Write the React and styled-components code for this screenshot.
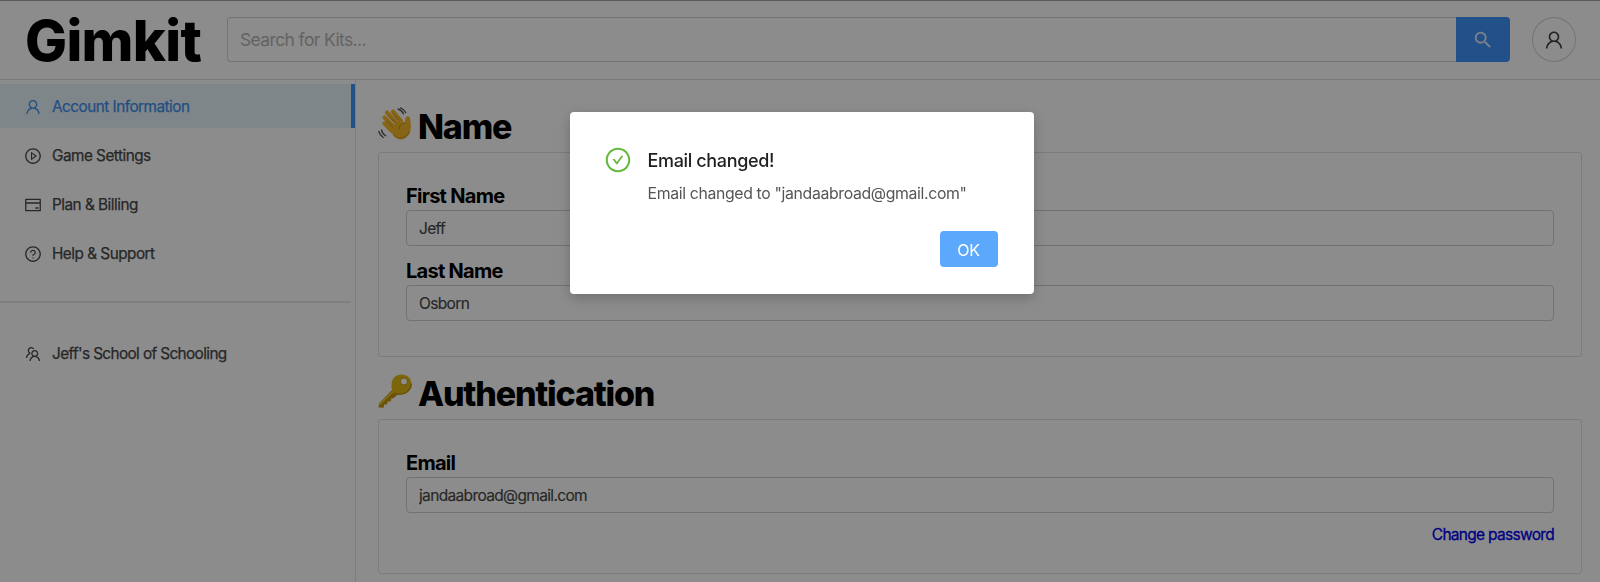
import React, { useState } from "react";
import styled, { createGlobalStyle } from "styled-components";
import {
  AiOutlineUser,
  AiOutlinePlayCircle,
  AiOutlineCreditCard,
  AiOutlineQuestionCircle,
  AiOutlineTeam,
  AiOutlineCheckCircle,
} from "react-icons/ai";
import { MdSearch } from "react-icons/md";

const GlobalStyle = createGlobalStyle`
  * {
    box-sizing: border-box;
  }

  body {
    margin: 0;
    overflow: hidden;
    background: #fff;
    color: #000;
    font-family: Inter, "Liberation Sans", sans-serif;
    font-size: 16px;
  }
`;

const Page = styled.div`
  display: flex;
  flex-direction: column;
  height: 582px;
  overflow: hidden;
  border-top: 1px solid #a6a6a6;
`;

// Header
const Header = styled.header`
  display: flex;
  align-items: center;
  flex: none;
  height: 79px;
  padding: 0 24px 1px 25px;
  border-bottom: 1px solid #dcdcdc;
`;

const Logo = styled.div`
  width: 202px;
  flex: none;
  padding-top: 2px;
  font-size: 56px;
  font-weight: 800;
  line-height: 60px;
  letter-spacing: -0.7px;
  white-space: nowrap;
`;

const SearchBar = styled.div`
  display: flex;
  flex: 1;
  height: 45px;
`;

const SearchInput = styled.input`
  flex: 1;
  padding: 0 12px;
  border: 1px solid #d2d2d2;
  border-right: none;
  border-radius: 4px 0 0 4px;
  outline: none;
  font-family: inherit;
  font-size: 17.5px;
  letter-spacing: -0.63px;

  &::placeholder {
    color: #b4b4b4;
    opacity: 1;
  }
`;

const SearchButton = styled.button`
  display: flex;
  align-items: center;
  justify-content: center;
  width: 54px;
  padding: 0;
  border: none;
  border-radius: 0 4px 4px 0;
  background: #3e94fb;
  color: #e4ecf6;
  font-size: 22px;
`;

const Avatar = styled.div`
  display: flex;
  align-items: center;
  justify-content: center;
  width: 44px;
  height: 45px;
  margin-left: 22px;
  padding-top: 1px;
  border: 1px solid #d2d2d2;
  border-radius: 50%;
  color: #404040;
  font-size: 22px;
`;

const Body = styled.div`
  display: flex;
  flex: 1;
  min-height: 0;
`;

// Sidebar
const Sidebar = styled.nav`
  width: 356px;
  flex: none;
  padding-top: 4px;
  border-right: 1px solid #e4e4e4;
`;

const MenuItem = styled.div`
  display: flex;
  align-items: center;
  height: 44px;
  margin-bottom: 5px;
  padding: 1px 0 0 24px;
  border-right: 4px solid ${(props) => (props.$active ? "#3e94fb" : "transparent")};
  background: ${(props) => (props.$active ? "#e6f4fb" : "transparent")};
  color: ${(props) => (props.$active ? "#3e8ff0" : "#484848")};
  font-size: 15.3px;
  letter-spacing: ${(props) => props.$spacing || -0.5}px;
  -webkit-text-stroke: 0.25px currentColor;
  cursor: pointer;

  svg {
    width: 18px;
    height: 18px;
    margin-right: 10px;
    stroke-width: 0;
  }
`;

const Divider = styled.div`
  height: 2px;
  margin: 26px 4px 28px 0;
  background: #e8e8e8;
`;

// Account form
const Content = styled.main`
  flex: 1;
  padding: 23px 18px 0 22px;
`;

const SectionTitle = styled.h1`
  display: flex;
  align-items: center;
  gap: 6px;
  height: 48px;
  margin: 0 0 1px;
  padding-bottom: 2px;
  font-size: 34px;
  font-weight: 800;
  letter-spacing: -1.2px;

  svg {
    flex: none;
    margin-top: -5px;
  }
`;

const Panel = styled.section`
  height: ${(props) => props.$height}px;
  margin-bottom: 13px;
  padding: 29px 27px;
  border: 1px solid #e2e2e2;
  border-radius: 3px;
`;

const Field = styled.label`
  display: block;
  margin-bottom: 11px;
`;

const FieldLabel = styled.span`
  display: block;
  height: 28px;
  font-size: 20px;
  font-weight: 700;
  line-height: 28px;
  letter-spacing: -0.72px;
`;

const Input = styled.input`
  display: block;
  width: 100%;
  height: 36px;
  padding: 0 12px;
  border: 1px solid #cfcfcf;
  border-radius: 4px;
  outline: none;
  color: #484848;
  font-family: inherit;
  font-size: 15.5px;
  letter-spacing: -0.65px;
  -webkit-text-stroke: 0.15px currentColor;
`;

const PasswordLink = styled.a`
  display: block;
  text-align: right;
  color: #0000ee;
  font-size: 15.5px;
  line-height: 22px;
  letter-spacing: -0.7px;
  -webkit-text-stroke: 0.3px currentColor;
  cursor: pointer;
`;

// Confirmation dialog
const Mask = styled.div`
  position: fixed;
  inset: 0;
  display: flex;
  align-items: flex-start;
  justify-content: center;
  padding: 112px 0 0 3px;
  background: rgba(0, 0, 0, 0.45);
`;

const Dialog = styled.div`
  display: flex;
  flex-direction: column;
  width: 464px;
  height: 182px;
  padding: 34px 36px 27px 34px;
  border-radius: 4px;
  background: #fff;
  box-shadow: 0 4px 14px rgba(0, 0, 0, 0.22);
`;

const DialogBody = styled.div`
  display: flex;
  flex: 1;
  gap: 16px;

  svg {
    flex: none;
    width: 28px;
    height: 28px;
    color: #66b93c;
  }
`;

const DialogTitle = styled.div`
  margin-top: 1px;
  color: #1f1f1f;
  font-size: 18px;
  font-weight: 500;
  line-height: 27px;
  letter-spacing: -0.35px;
`;

const DialogText = styled.div`
  margin-top: 8px;
  color: #565656;
  font-size: 15.8px;
  line-height: 24px;
  letter-spacing: -0.34px;
  white-space: nowrap;
`;

const OkButton = styled.button`
  align-self: flex-end;
  width: 58px;
  height: 36px;
  padding: 1px 0 0;
  border: none;
  border-radius: 4px;
  background: #5ca8fc;
  color: #fff;
  font-family: inherit;
  font-size: 16px;
  letter-spacing: -0.3px;
`;

const WaveIcon = () => (
  <svg width="34" height="34" viewBox="0 0 34 34" fill="none">
    <g stroke="#f5b829" strokeWidth="4.2" strokeLinecap="round">
      <path d="M6.5 16.5 14 24" />
      <path d="M6.5 10.5 16 20" />
      <path d="M9 5.5 19 16" />
      <path d="M15 4.5 23 14" />
    </g>
    <path
      d="M12 22 22 12c2 1.500 3 3 4.500 4 .8-1.800.3-4.800 2-6.300 1.600-1 3.500.2 3.700 2.200.2 3 .9 5.400.6 9.300-.4 6-4.800 11-10.300 11.200C18 32.500 15.500 28 12 22Z"
      fill="#f5b829"
    />
    <path
      d="m8.500 14.200 6 6M10.500 9l6.500 6.500M14 6l6.500 7M27 16c-4 .5-6 2.500-6 6"
      stroke="#bd7f13"
      strokeWidth="0.8"
      strokeLinecap="round"
    />
    <path d="M15 27c4.500 6.500 14 5 16.500-3" stroke="#d69a1c" strokeWidth="1.200" />
    <path
      d="M20 2c2.500.7 4.500 2.500 5.500 5M22.500 0.800c2.500 1 4.200 2.700 5.200 4.800M3.500 23c.5 2.500 2 4.500 4.200 5.700M.8 24.500c.7 2.500 2.200 4.600 4.400 6"
      stroke="#4f5963"
      strokeWidth="1.300"
      strokeLinecap="round"
    />
  </svg>
);

const KeyIcon = () => (
  <svg width="34" height="34" viewBox="0 0 34 34">
    <path
      d="M15 15 1 29.500 0.600 33.500l5 .2.600-3.200 2.800.1.700-3.200 3 .1.700-3.200 2.200-.1L20 20Z"
      fill="#c99508"
    />
    <path d="m16 16.500-14.500 14" stroke="#f3cc3b" strokeWidth="1.500" />
    <path
      d="M16 3.500C20-.5 27-.3 31 3.500c3.500 4 3.200 10-1 14-4 3.500-9 4-14.500 2.500C13 15.500 12.500 8 16 3.500Z"
      fill="#e3b915"
    />
    <path d="M16 19.500c6 1.500 11 .8 14.500-2.800 2-2 3-4.800 2.800-7.200" fill="none" stroke="#b88708" strokeWidth="1.200" />
    <circle cx="26" cy="7.500" r="3.600" fill="#fff" stroke="#c69a16" strokeWidth="1" />
  </svg>
);

const menuItems = [
  { label: "Account Information", icon: AiOutlineUser },
  { label: "Game Settings", icon: AiOutlinePlayCircle },
  { label: "Plan & Billing", icon: AiOutlineCreditCard },
  { label: "Help & Support", icon: AiOutlineQuestionCircle },
];

const App = () => {
  const [active, setActive] = useState("Account Information");
  const [open, setOpen] = useState(true);

  return (
    <>
      <GlobalStyle />
      <Page>
        <Header>
          <Logo>Gimkit</Logo>
          <SearchBar>
            <SearchInput placeholder="Search for Kits..." />
            <SearchButton aria-label="Search">
              <MdSearch />
            </SearchButton>
          </SearchBar>
          <Avatar>
            <AiOutlineUser />
          </Avatar>
        </Header>
        <Body>
          <Sidebar>
            {menuItems.map(({ label, icon: Icon }) => (
              <MenuItem key={label} $active={active === label} onClick={() => setActive(label)}>
                <Icon />
                {label}
              </MenuItem>
            ))}
            <Divider />
            <MenuItem $spacing={-0.6}>
              <AiOutlineTeam />
              Jeff's School of Schooling
            </MenuItem>
          </Sidebar>
          <Content>
            <SectionTitle>
              <WaveIcon />
              Name
            </SectionTitle>
            <Panel $height={205}>
              <Field>
                <FieldLabel>First Name</FieldLabel>
                <Input defaultValue="Jeff" />
              </Field>
              <Field>
                <FieldLabel>Last Name</FieldLabel>
                <Input defaultValue="Osborn" />
              </Field>
            </Panel>
            <SectionTitle>
              <KeyIcon />
              Authentication
            </SectionTitle>
            <Panel $height={155}>
              <Field>
                <FieldLabel>Email</FieldLabel>
                <Input defaultValue="jandaabroad@gmail.com" />
              </Field>
              <PasswordLink>Change password</PasswordLink>
            </Panel>
          </Content>
        </Body>
      </Page>
      {open && (
        <Mask>
          <Dialog role="dialog">
            <DialogBody>
              <AiOutlineCheckCircle />
              <div>
                <DialogTitle>Email changed!</DialogTitle>
                <DialogText>Email changed to "jandaabroad@gmail.com"</DialogText>
              </div>
            </DialogBody>
            <OkButton onClick={() => setOpen(false)}>OK</OkButton>
          </Dialog>
        </Mask>
      )}
    </>
  );
};

export default App;
